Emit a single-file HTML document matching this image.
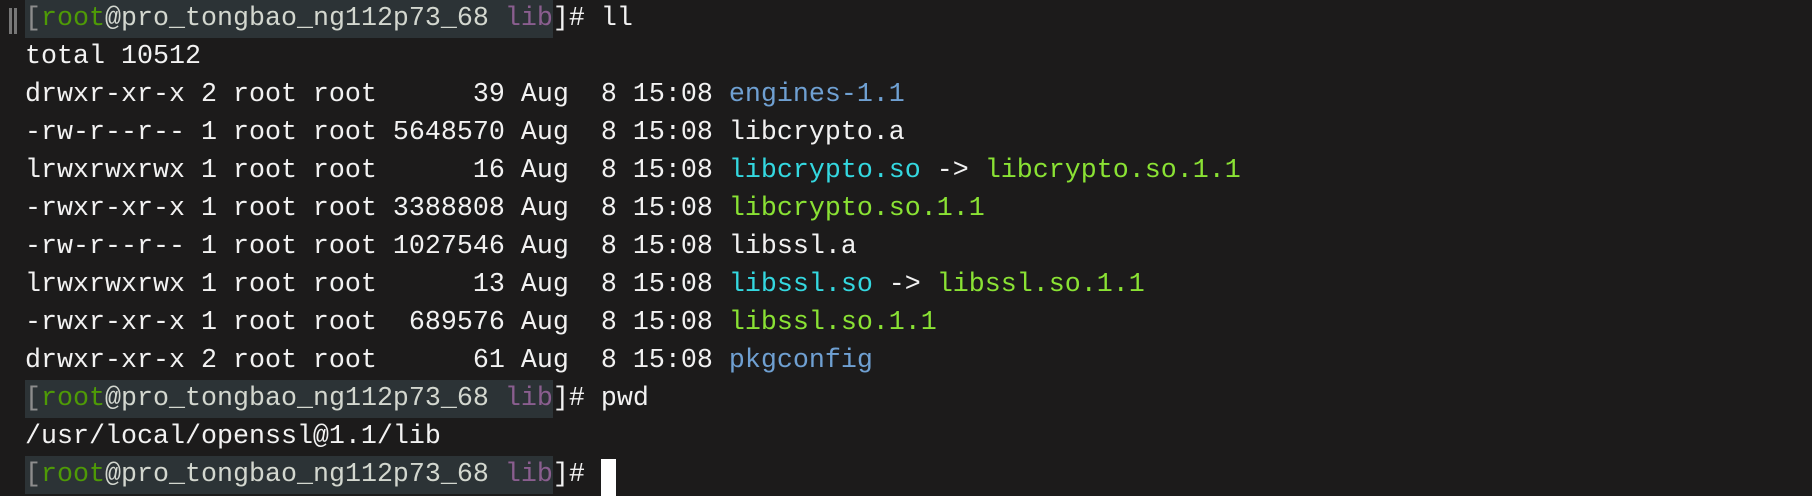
<!DOCTYPE html>
<html><head><meta charset="utf-8"><style>
html,body{margin:0;padding:0;background:#1c1b1b;width:1812px;height:496px;overflow:hidden}
.t{position:absolute;left:25px;top:0px;font-family:"Liberation Mono",monospace;font-size:26.67px;line-height:38px;color:#f2f2f2;white-space:pre}
.hl{background:#2c3336;display:inline-block;height:38px;vertical-align:top}
.g{color:#8d8d8d}.r{color:#4e9a06}.l{color:#d3d7cf}.p{color:#8a5e8f}
.b{color:#6fa0d2}.c{color:#34d8e0}.gr{color:#8ae234}
.mk{position:absolute;left:9px;top:8px;width:3px;height:26px;background:#777;box-shadow:5px 0 0 #777}
.cur{position:absolute;left:601px;top:459px;width:15px;height:37px;background:#fff}
</style></head><body>
<div class="mk"></div>
<div class="t"><span class="hl"><span class="g">[</span><span class="r">root</span><span class="l">@pro_tongbao_ng112p73_68 </span><span class="p">lib</span></span>]# ll
total 10512
drwxr-xr-x 2 root root      39 Aug  8 15:08 <span class="b">engines-1.1</span>
-rw-r--r-- 1 root root 5648570 Aug  8 15:08 libcrypto.a
lrwxrwxrwx 1 root root      16 Aug  8 15:08 <span class="c">libcrypto.so</span> -&gt; <span class="gr">libcrypto.so.1.1</span>
-rwxr-xr-x 1 root root 3388808 Aug  8 15:08 <span class="gr">libcrypto.so.1.1</span>
-rw-r--r-- 1 root root 1027546 Aug  8 15:08 libssl.a
lrwxrwxrwx 1 root root      13 Aug  8 15:08 <span class="c">libssl.so</span> -&gt; <span class="gr">libssl.so.1.1</span>
-rwxr-xr-x 1 root root  689576 Aug  8 15:08 <span class="gr">libssl.so.1.1</span>
drwxr-xr-x 2 root root      61 Aug  8 15:08 <span class="b">pkgconfig</span>
<span class="hl"><span class="g">[</span><span class="r">root</span><span class="l">@pro_tongbao_ng112p73_68 </span><span class="p">lib</span></span>]# pwd
/usr/local/openssl@1.1/lib
<span class="hl"><span class="g">[</span><span class="r">root</span><span class="l">@pro_tongbao_ng112p73_68 </span><span class="p">lib</span></span>]# </div>
<div class="cur"></div>
</body></html>
